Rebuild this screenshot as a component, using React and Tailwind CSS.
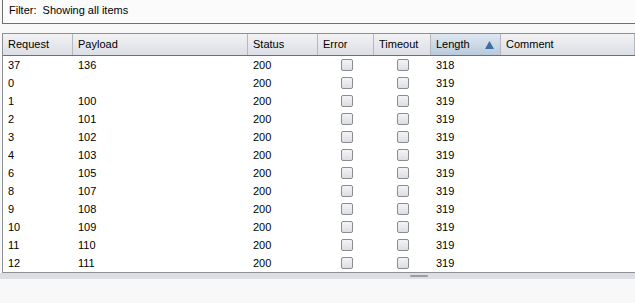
import React from 'react';

// column layout, widths in px
const columns = [
    { key: 'request', label: 'Request', w: 'w-[70px]' },
    { key: 'payload', label: 'Payload', w: 'w-[175px]' },
    { key: 'status', label: 'Status', w: 'w-[70px]' },
    { key: 'error', label: 'Error', w: 'w-[56px]' },
    { key: 'timeout', label: 'Timeout', w: 'w-[57px]' },
    { key: 'length', label: 'Length', w: 'w-[70px]', sorted: true },
    { key: 'comment', label: 'Comment', w: 'flex-1' },
];

const rows = [
    ['37', '136', '200', '318'],
    ['0', '', '200', '319'],
    ['1', '100', '200', '319'],
    ['2', '101', '200', '319'],
    ['3', '102', '200', '319'],
    ['4', '103', '200', '319'],
    ['6', '105', '200', '319'],
    ['8', '107', '200', '319'],
    ['9', '108', '200', '319'],
    ['10', '109', '200', '319'],
    ['11', '110', '200', '319'],
    ['12', '111', '200', '319'],
];

const Check = () => (
    <span className="block w-[12px] h-[12px] rounded-[2px] border border-[#8a8d94] bg-gradient-to-b from-[#f4f4f6] to-[#dcdee3]" />
);

const App = () => {
    return (
        <div
            className="w-[635px] h-[303px] overflow-hidden bg-[#f8f8f8] text-[11px] text-black flex flex-col"
            style={{ fontFamily: '"Liberation Sans", Arial, sans-serif' }}
        >
            {/* filter bar */}
            <div className="h-[24px] ml-[2px] border-l border-b border-[#6f6f6f] bg-[#fbfbfb] flex items-center pl-[6px] pb-[2px]">
                <span>Filter:&nbsp; Showing all items</span>
            </div>

            {/* table */}
            <div className="mt-[9px] ml-[2px] h-[240px] border-l border-t border-b border-[#8e9096] bg-white flex flex-col">
                <div className="h-[22px] flex border-b border-[#6f7075] bg-gradient-to-b from-[#f3f3f5] to-[#dcdee5]">
                    {columns.map((c) => (
                        <div
                            key={c.key}
                            className={`${c.w} shrink-0 flex items-center pl-[5px] pr-[6px] border-r border-[#b5b8bf] ${
                                c.sorted ? 'bg-gradient-to-b from-[#dfe8f1] to-[#b9cadc]' : ''
                            }`}
                        >
                            <span className="flex-1">{c.label}</span>
                            {c.sorted && (
                                <svg width="9" height="8" viewBox="0 0 9 8">
                                    <path d="M4.5 0 L9 8 L0 8 Z" fill="#3b6ea5" />
                                </svg>
                            )}
                        </div>
                    ))}
                </div>
                {rows.map((r, i) => (
                    <div key={i} className="h-[18px] flex items-center">
                        <div className="w-[70px] shrink-0 pl-[5px]">{r[0]}</div>
                        <div className="w-[175px] shrink-0 pl-[5px]">{r[1]}</div>
                        <div className="w-[70px] shrink-0 pl-[5px]">{r[2]}</div>
                        <div className="w-[56px] shrink-0 flex justify-center pl-[2px]">
                            <Check />
                        </div>
                        <div className="w-[57px] shrink-0 flex justify-center">
                            <Check />
                        </div>
                        <div className="w-[70px] shrink-0 pl-[5px]">{r[3]}</div>
                        <div className="flex-1" />
                    </div>
                ))}
            </div>

            {/* splitter */}
            <div className="h-[6px] bg-[#dcdee3] flex">
                <span className="mt-[2px] ml-[410px] w-[18px] h-[2px] bg-[#9a9ca2] rounded-full" />
            </div>
        </div>
    );
};

export default App;
